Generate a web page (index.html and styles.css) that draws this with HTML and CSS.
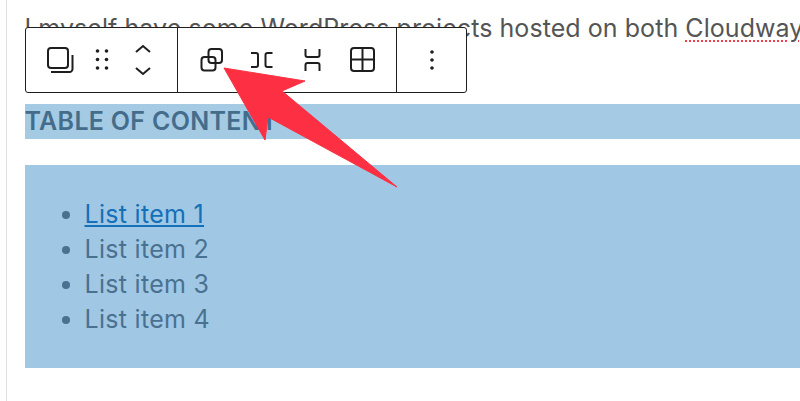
FILE: index.html
```html
<!DOCTYPE html>
<html lang="en">
<head>
    <meta charset="UTF-8">
    <title>Block toolbar</title>
    <link rel="stylesheet" href="styles.css">
</head>
<body>
    <div class="page">
        <p class="intro">I myself have some WordPress projects hosted on both <span class="typo">Cloudways</span></p>
        <h2 class="toc-title">TABLE OF CONTENT</h2>
        <div class="toc-box">
            <ul class="toc-list">
                <li><a href="#">List item 1</a></li>
                <li>List item 2</li>
                <li>List item 3</li>
                <li>List item 4</li>
            </ul>
        </div>
    </div>

    <!-- floating block toolbar -->
    <div class="toolbar">
        <div class="tool-group first">
            <svg class="icon" viewBox="0 0 34 34"><rect x="5" y="5" width="20" height="20" rx="3"/><path d="M29.5 12v14a3 3 0 0 1-3 3H8"/></svg>
            <svg class="icon" viewBox="0 0 34 34"><g class="dots"><circle cx="12.5" cy="8" r="1.8"/><circle cx="21.5" cy="8" r="1.8"/><circle cx="12.5" cy="16.5" r="1.8"/><circle cx="21.5" cy="16.5" r="1.8"/><circle cx="12.5" cy="25" r="1.8"/><circle cx="21.5" cy="25" r="1.8"/></g></svg>
            <svg class="icon" viewBox="0 0 34 34"><path d="M10 9l7-6 7 6"/><path d="M10 25l7 6 7-6"/></svg>
        </div>
        <div class="tool-group second">
            <svg class="icon" viewBox="0 0 34 34"><rect x="15.5" y="6" width="13.5" height="14" rx="3"/><rect x="8.5" y="14" width="14" height="13.5" rx="3"/></svg>
            <svg class="icon" viewBox="0 0 34 34"><path d="M7 10h5a2 2 0 0 1 2 2v10a2 2 0 0 1-2 2H7"/><path d="M28.5 10h-5a2 2 0 0 0-2 2v10a2 2 0 0 0 2 2h5"/></svg>
            <svg class="icon" viewBox="0 0 34 34"><path d="M10.5 6v6a2 2 0 0 0 2 2h10a2 2 0 0 0 2-2V6"/><path d="M10.5 28v-6a2 2 0 0 1 2-2h10a2 2 0 0 1 2 2v6"/></svg>
            <svg class="icon" viewBox="0 0 34 34"><rect x="5" y="5" width="23" height="23" rx="3"/><path d="M16.5 5v23M5 16.5h23"/></svg>
        </div>
        <div class="tool-group third">
            <svg class="icon" viewBox="0 0 34 34"><g class="dots"><circle cx="17" cy="9" r="1.8"/><circle cx="17" cy="17" r="1.8"/><circle cx="17" cy="25" r="1.8"/></g></svg>
        </div>
    </div>

    <!-- red annotation arrow -->
    <svg class="arrow" viewBox="0 0 800 401"><polygon points="224,68 305,81 282,91 397,187 268,117 265,140"/></svg>
</body>
</html>
```

FILE: styles.css
```css
* {
    margin: 0;
    padding: 0;
    box-sizing: border-box;
}

body {
    font-family: 'Inter', sans-serif;
    background: #ffffff;
    height: 401px;
    width: 800px;
    overflow: hidden;
    position: relative;
}

.page {
    margin-left: 6px;
    border-left: 1.5px solid #dedede;
    height: 401px;
    padding: 11px 0 0 17.5px;
    overflow: hidden;
}

.intro {
    font-size: 25px;
    letter-spacing: 0.06px;
    line-height: 34px;
    color: #555555;
    white-space: nowrap;
    margin-bottom: 59px;
}

.typo {
    text-decoration: underline dotted #f0404c 2px;
    text-underline-offset: 3px;
}

.toc-title {
    background: #a5cae3;
    color: #446d8b;
    font-size: 25px;
    font-weight: 600;
    letter-spacing: 0.3px;
    line-height: 35px;
    white-space: nowrap;
    margin-bottom: 26px;
}

.toc-box {
    background: #a0c8e4;
    height: 203px;
    padding: 32px 0 0 60px;
}

.toc-list {
    font-size: 25px;
    letter-spacing: 0.3px;
    line-height: 35px;
    color: #4a7190;
}

.toc-list a {
    color: #1470b8;
}

.toolbar {
    position: absolute;
    left: 25px;
    top: 27px;
    width: 442px;
    height: 66px;
    display: flex;
    background: #ffffff;
    border: 1.5px solid #1e1e1e;
    border-radius: 3px;
}

.tool-group {
    display: flex;
    align-items: center;
}

.tool-group.first {
    width: 152px;
    padding-left: 17px;
    gap: 7.5px;
    border-right: 1.5px solid #1e1e1e;
}

.tool-group.second {
    width: 219px;
    padding-left: 15px;
    gap: 17px;
    border-right: 1.5px solid #1e1e1e;
}

.tool-group.third {
    flex: 1;
    justify-content: center;
}

.icon {
    width: 34px;
    height: 34px;
    flex: none;
    fill: none;
    stroke: #1e1e1e;
    stroke-width: 2;
}

.icon .dots {
    fill: #1e1e1e;
    stroke: none;
}

.arrow {
    position: absolute;
    left: 0;
    top: 0;
    width: 800px;
    height: 401px;
    fill: #fc3042;
    stroke: #fc3042;
    stroke-width: 1;
    stroke-linejoin: round;
}
```
